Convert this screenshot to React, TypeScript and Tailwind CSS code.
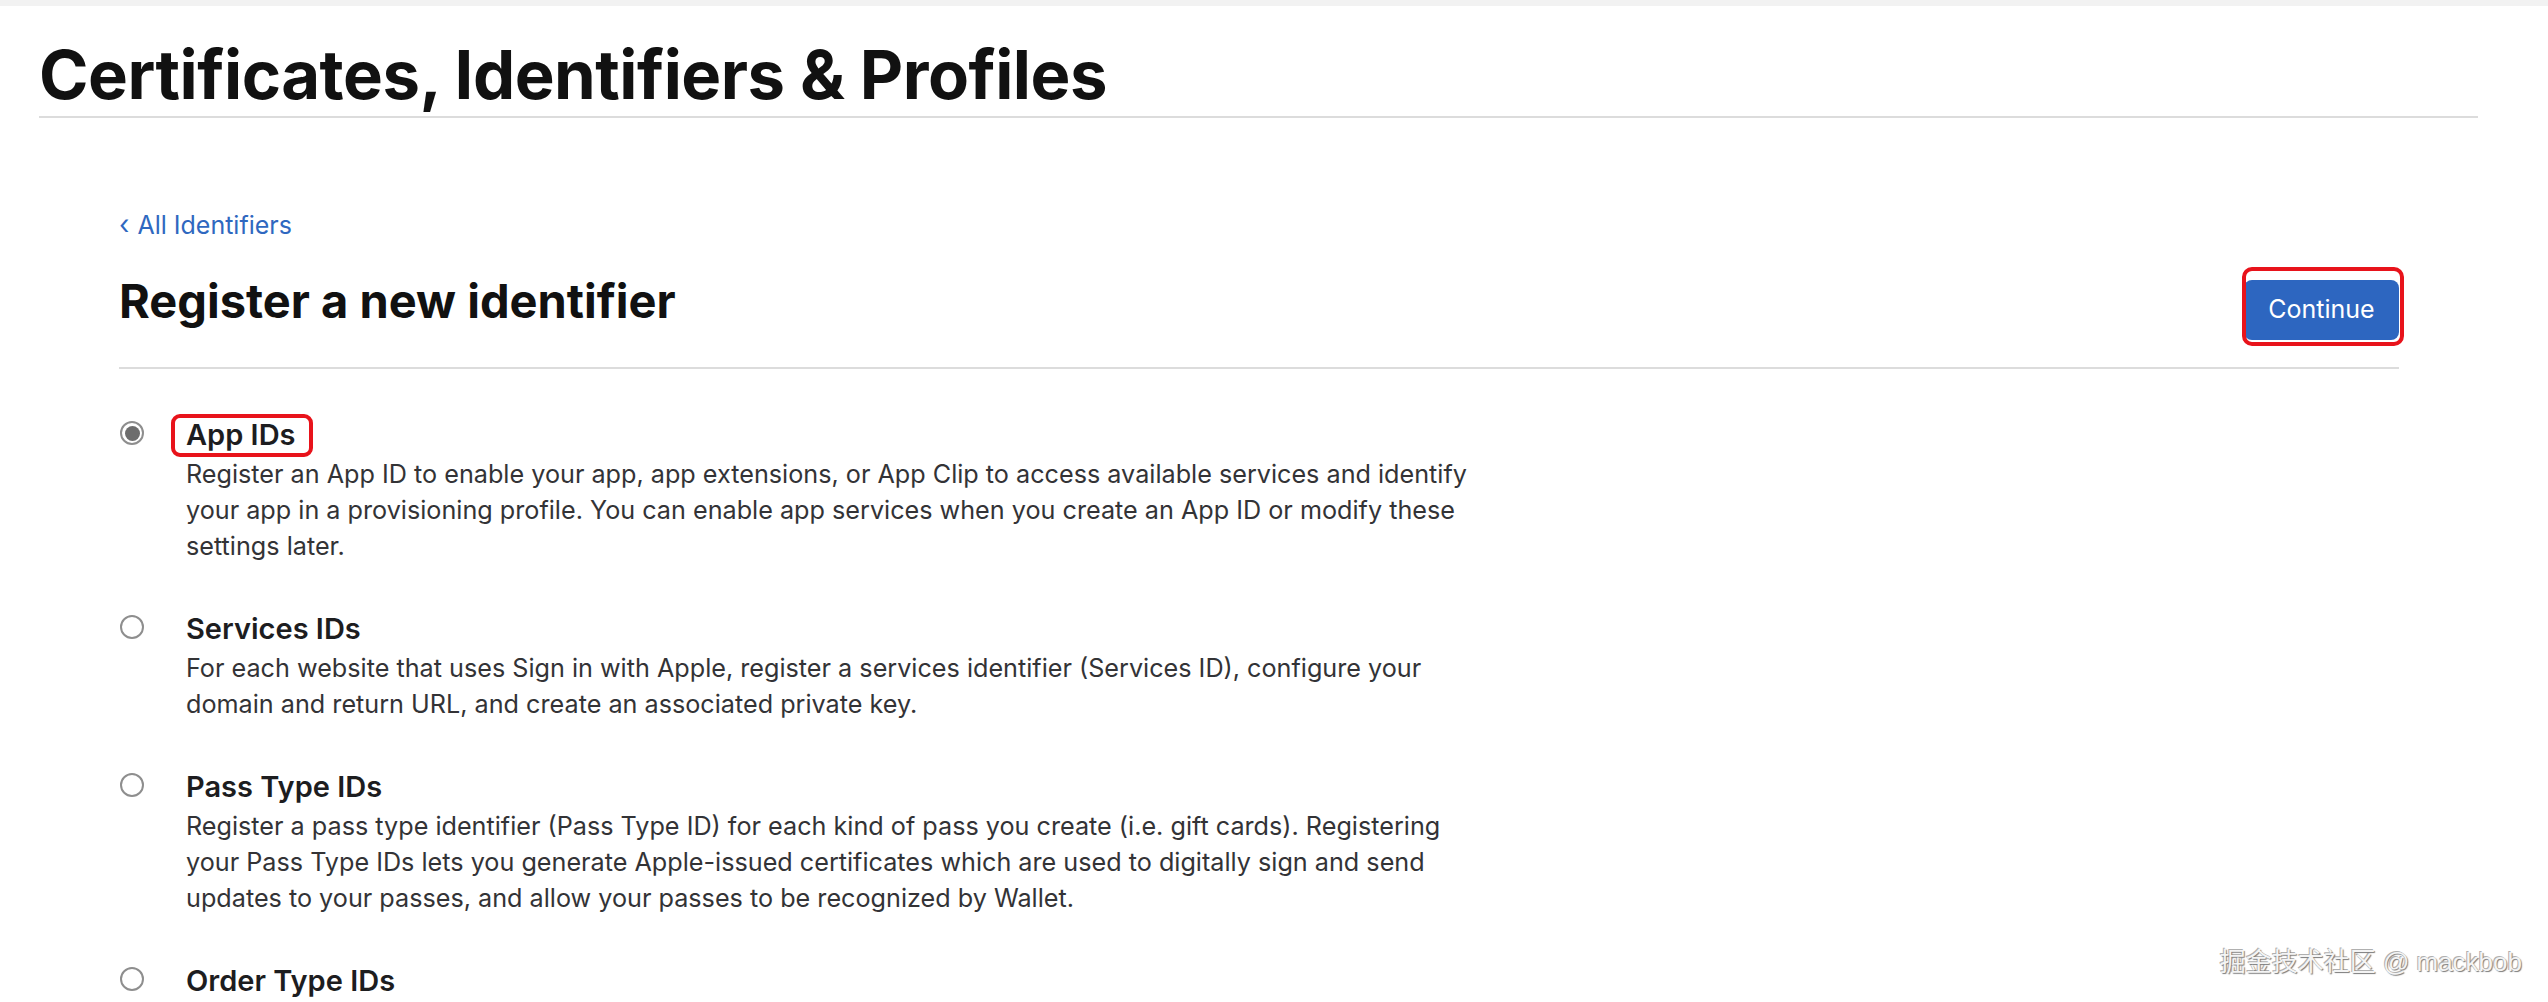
import React from "react";

type IdentifierOption = {
  id: string;
  title: string;
  lines: string[];
  checked?: boolean;
  highlight?: boolean;
};

const OPTIONS: IdentifierOption[] = [
  {
    id: "app",
    title: "App IDs",
    checked: true,
    highlight: true,
    lines: [
      "Register an App ID to enable your app, app extensions, or App Clip to access available services and identify",
      "your app in a provisioning profile. You can enable app services when you create an App ID or modify these",
      "settings later.",
    ],
  },
  {
    id: "services",
    title: "Services IDs",
    lines: [
      "For each website that uses Sign in with Apple, register a services identifier (Services ID), configure your",
      "domain and return URL, and create an associated private key.",
    ],
  },
  {
    id: "pass",
    title: "Pass Type IDs",
    lines: [
      "Register a pass type identifier (Pass Type ID) for each kind of pass you create (i.e. gift cards). Registering",
      "your Pass Type IDs lets you generate Apple-issued certificates which are used to digitally sign and send",
      "updates to your passes, and allow your passes to be recognized by Wallet.",
    ],
  },
  {
    id: "order",
    title: "Order Type IDs",
    lines: [],
  },
];

function Radio({ checked }: { checked?: boolean }) {
  return (
    <span className="mt-[4px] flex h-[24px] w-[24px] shrink-0 items-center justify-center rounded-full border-[2px] border-[#8e8e8e] bg-white">
      {checked && <span className="h-[15px] w-[15px] rounded-full bg-[#6d6d6d]" />}
    </span>
  );
}

function OptionRow({ option }: { option: IdentifierOption }) {
  return (
    <div className="flex gap-[42px]">
      <Radio checked={option.checked} />
      <div className="flex flex-col">
        <div className="relative w-fit">
          <span className="text-[29px] font-semibold leading-[36px] text-[#1d1d1f]">{option.title}</span>
          {option.highlight && (
            <span className="pointer-events-none absolute -bottom-[4px] -left-[15px] -right-[17px] -top-[3px] rounded-[9px] border-[4px] border-[#e8131b]" />
          )}
        </div>
        {option.lines.length > 0 && (
          <p className="mt-[3px] text-[25.2px] leading-[36px] text-[#333336]">
            {option.lines.map((line) => (
              <span key={line} className="block whitespace-nowrap">
                {line}
              </span>
            ))}
          </p>
        )}
      </div>
    </div>
  );
}

export default function App() {
  return (
    <div className="relative h-[1002px] w-[2548px] overflow-hidden bg-white font-['Inter','Liberation_Sans',sans-serif] antialiased">
      <div className="h-[6px] bg-[#f2f2f2]" />

      <header className="ml-[39px] w-[2439px] border-b-[2px] border-[#dcdcdc] pb-[1px] pt-[29px]">
        <h1 className="text-[67px] font-bold leading-[80px] tracking-[-0.5px] text-[#111]">
          Certificates, Identifiers &amp; Profiles
        </h1>
      </header>

      <main className="ml-[119px] w-[2280px]">
        <a href="#" className="mt-[92px] flex items-center gap-[8px] text-[25px] leading-[30px] text-[#2f68c0]">
          <span className="text-[27px]">‹</span>
          <span>All Identifiers</span>
        </a>

        <div className="mt-[33px] flex items-end justify-between border-b-[2px] border-[#dcdcdc] pb-[27px]">
          <h2 className="mb-[11px] text-[47px] font-bold leading-[56px] text-[#111]">Register a new identifier</h2>
          <div className="relative">
            <button
              type="button"
              className="h-[60px] w-[155px] rounded-[8px] bg-[#2d66c0] text-[25px] text-white"
            >
              Continue
            </button>
            <span className="pointer-events-none absolute -bottom-[6px] -left-[2px] -right-[5px] -top-[13px] rounded-[10px] border-[4px] border-[#e8131b]" />
          </div>
        </div>

        <div className="mt-[48px] flex flex-col gap-[47px] pl-[1px]">
          {OPTIONS.map((option) => (
            <OptionRow key={option.id} option={option} />
          ))}
        </div>
      </main>

      <div className="absolute right-[26px] top-[944px] font-['Liberation_Sans','Noto_Sans_CJK_SC',sans-serif] text-[26px] leading-[36px] text-[#f4f4f4] [text-shadow:1px_1px_1px_#7a7a7a,-1px_-1px_0_#b0b0b0]">
        掘金技术社区 @ mackbob
      </div>
    </div>
  );
}
